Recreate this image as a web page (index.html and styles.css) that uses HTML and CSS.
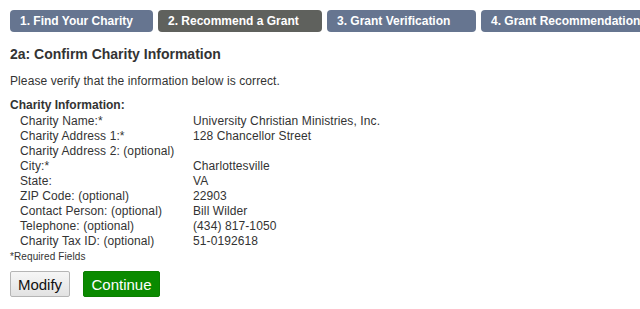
FILE: index.html
```html
<!DOCTYPE html>
<html>
<head>
<meta charset="utf-8">
<link rel="stylesheet" href="styles.css">
</head>
<body>
<div class="page">
  <div class="tabs">
    <div class="tab tab-1">1. Find Your Charity</div>
    <div class="tab tab-2 active">2. Recommend a Grant</div>
    <div class="tab tab-3">3. Grant Verification</div>
    <div class="tab tab-4">4. Grant Recommendation</div>
  </div>
  <h2 class="title">2a: Confirm Charity Information</h2>
  <p class="intro">Please verify that the information below is correct.</p>
  <div class="section-label">Charity Information:</div>
  <div class="info">
    <div class="label">Charity Name:*</div><div class="value">University Christian Ministries, Inc.</div>
    <div class="label">Charity Address 1:*</div><div class="value">128 Chancellor Street</div>
    <div class="label">Charity Address 2: (optional)</div><div class="value"></div>
    <div class="label">City:*</div><div class="value">Charlottesville</div>
    <div class="label">State:</div><div class="value">VA</div>
    <div class="label">ZIP Code: (optional)</div><div class="value">22903</div>
    <div class="label">Contact Person: (optional)</div><div class="value">Bill Wilder</div>
    <div class="label">Telephone: (optional)</div><div class="value">(434) 817-1050</div>
    <div class="label">Charity Tax ID: (optional)</div><div class="value">51-0192618</div>
  </div>
  <div class="required">*Required Fields</div>
  <div class="actions">
    <button class="btn btn-modify">Modify</button>
    <button class="btn btn-continue">Continue</button>
  </div>
</div>
</body>
</html>
```
FILE: styles.css
```css
html, body {
  margin: 0;
  padding: 0;
  background: #fff;
}
body {
  font-family: "Liberation Sans", Arial, sans-serif;
  color: #333;
  font-size: 12px;
  letter-spacing: 0.1px;
  overflow: hidden;
}
.page {
  padding: 10px 0 0 10px;
}
.tabs {
  display: flex;
  gap: 5px;
  overflow: hidden;
}
.tab {
  flex: none;
  height: 22px;
  line-height: 22px;
  border-radius: 4px;
  background: #667590;
  color: #fff;
  font-weight: bold;
  font-size: 12px;
  letter-spacing: 0;
  padding-left: 10px;
  box-sizing: border-box;
}
.tab.active {
  background: #5f615d;
}
.tab-1 { width: 143px; }
.tab-2 { width: 164px; }
.tab-3 { width: 149px; }
.tab-4 { width: 170px; }
.title {
  margin: 13px 0 0 0;
  font-size: 14px;
  line-height: 18px;
  font-weight: bold;
  letter-spacing: 0;
  color: #333;
}
.intro {
  margin: 10px 0 0 0;
  line-height: 16px;
}
.section-label {
  margin-top: 9px;
  font-weight: bold;
  line-height: 15px;
  letter-spacing: 0;
}
.info {
  display: grid;
  grid-template-columns: 173px auto;
  padding-left: 10px;
  margin-top: 1px;
  line-height: 15px;
}
.value {
  min-height: 15px;
}
.required {
  font-size: 10px;
  line-height: 14px;
  margin-top: 1px;
}
.actions {
  display: flex;
  gap: 13px;
  margin-top: 7px;
}
.btn {
  font-family: "Liberation Sans", Arial, sans-serif;
  font-size: 15px;
  height: 26px;
  padding: 0;
  border-radius: 2px;
  cursor: pointer;
}
.btn-modify {
  width: 60px;
  background: linear-gradient(#f6f6f6, #e2e2e2);
  border: 1px solid #b5b5b5;
  color: #111;
}
.btn-continue {
  width: 77px;
  background: #0a8a00;
  border: 1px solid #0a7f00;
  color: #fff;
}
```
